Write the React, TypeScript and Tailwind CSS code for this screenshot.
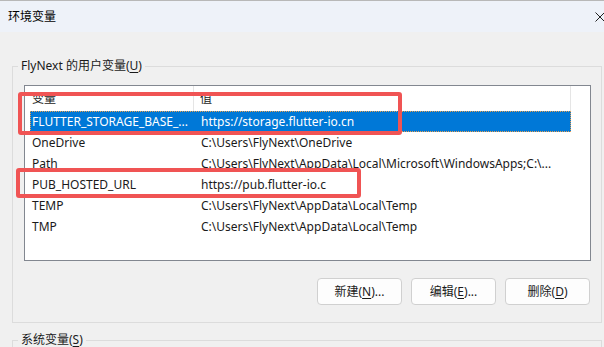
import React from "react";

const font = { fontFamily: '"Noto Sans", "Noto Sans CJK SC", sans-serif' };

const rows: { name: string; value: string; selected?: boolean }[] = [
  { name: "FLUTTER_STORAGE_BASE_...", value: "https://storage.flutter-io.cn", selected: true },
  { name: "OneDrive", value: "C:\\Users\\FlyNext\\OneDrive" },
  { name: "Path", value: "C:\\Users\\FlyNext\\AppData\\Local\\Microsoft\\WindowsApps;C:\\..." },
  { name: "PUB_HOSTED_URL", value: "https://pub.flutter-io.c" },
  { name: "TEMP", value: "C:\\Users\\FlyNext\\AppData\\Local\\Temp" },
  { name: "TMP", value: "C:\\Users\\FlyNext\\AppData\\Local\\Temp" },
];

function Btn({ label, k, tail }: { label: string; k: string; tail: string }) {
  return (
    <button className="w-[85px] h-[27px] rounded-[4px] border border-[#d0d0d0] bg-[#fdfdfd] text-[12px] text-[#1a1a1a] flex items-center justify-center">
      {label}(<span className="underline underline-offset-2">{k}</span>){tail}
    </button>
  );
}

export default function App() {
  return (
    <div className="relative w-[604px] h-[347px] overflow-hidden bg-[#f0f0f0] flex flex-col text-[#1a1a1a]" style={font}>
      {/* title bar */}
      <div className="h-[32px] shrink-0 bg-[#eef2f9] border-t border-[#b8b8b8] flex items-center justify-between pl-[8px]">
        <span className="text-[12px] text-black">环境变量</span>
        <svg width="10" height="10" viewBox="0 0 10 10" className="mr-[-1px] mt-[1px]">
          <path d="M0.5 0.5 L9.5 9.5 M9.5 0.5 L0.5 9.5" stroke="#222" strokeWidth="1" />
        </svg>
      </div>

      {/* user variables group */}
      <div className="relative ml-[12px] mr-[2px] mt-[34px] h-[257px] shrink-0 border border-[#dcdcdc] pl-[11px] pr-[11px] pt-[18px] flex flex-col">
        <span className="absolute left-[5px] top-[-10px] px-[3px] bg-[#f0f0f0] text-[12px] leading-[18px]">
          FlyNext 的用户变量(<span className="underline underline-offset-2">U</span>)
        </span>
        <div className="h-[176px] w-[567px] border border-[#828790] bg-white flex flex-col">
          <div className="h-[25px] flex items-stretch text-[12px]">
            <div className="w-[169px] pl-[7px] flex items-center border-r border-[#e5e5e5]">变量</div>
            <div className="w-[377px] pl-[6px] flex items-center border-r border-[#e5e5e5]">值</div>
          </div>
          {rows.map((r) => (
            <div key={r.name} className="h-[21px] flex text-[12px] pl-[5px]">
              <div
                className={
                  "w-[541px] flex items-center " +
                  (r.selected ? "bg-[#0078d7] text-white border border-dotted border-[#e8a050]" : "border border-transparent")
                }
              >
                <div className="w-[164px] pl-[1px] whitespace-nowrap overflow-hidden">{r.name}</div>
                <div className="pl-[6px] whitespace-nowrap">{r.value}</div>
              </div>
            </div>
          ))}
        </div>
        <div className="mt-[17px] flex justify-end gap-[9px] w-[566px]">
          <Btn label="新建" k="N" tail="..." />
          <Btn label="编辑" k="E" tail="..." />
          <Btn label="删除" k="D" tail="" />
        </div>
      </div>

      {/* system variables group */}
      <div className="relative ml-[12px] mr-[2px] mt-[17px] h-[40px] shrink-0 border border-[#dcdcdc]">
        <span className="absolute left-[5px] top-[-10px] px-[3px] bg-[#f0f0f0] text-[12px] leading-[18px]">
          系统变量(<span className="underline underline-offset-2">S</span>)
        </span>
      </div>

      {/* annotation boxes */}
      <div className="absolute left-[18px] top-[92px] w-[384px] h-[43px] border-[4px] border-[#f05454] rounded-[3px]" />
      <div className="absolute left-[16px] top-[168px] w-[345px] h-[30px] border-[4px] border-[#f05454] rounded-[3px]" />
    </div>
  );
}
